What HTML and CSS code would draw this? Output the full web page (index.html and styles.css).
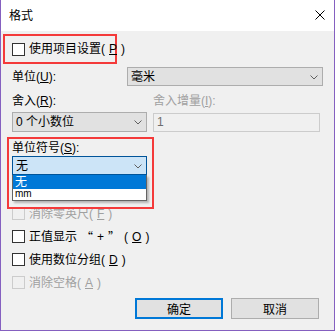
FILE: index.html
```html
<!DOCTYPE html>
<html lang="zh-CN">
<head>
    <meta charset="UTF-8">
    <title>格式</title>
    <link rel="stylesheet" href="styles.css">
</head>
<body>
    <div class="window">
        <div class="titlebar">
            <span class="title">格式</span>
            <svg class="close" width="10" height="10" viewBox="0 0 10 10">
                <path d="M0.5 0.5 L9.5 9.5 M9.5 0.5 L0.5 9.5" stroke="#000" stroke-width="1" fill="none"/>
            </svg>
        </div>

        <div class="client">
            <div class="mark mark-top">
                <label class="check"><span class="box"></span>使用项目设置(<u>P</u>)</label>
            </div>

            <div class="row unit-row">
                <span class="label unit-label">单位(<u>U</u>):</span>
                <div class="combo unit-combo">毫米<svg class="chev" width="8" height="5" viewBox="0 0 8 5"><path d="M0.5 0.5 L4 4 L7.5 0.5" stroke="#606060" fill="none"/></svg></div>
            </div>

            <div class="row label-row">
                <span class="label round-label">舍入(<u>R</u>):</span>
                <span class="label disabled">舍入增量(<u>I</u>):</span>
            </div>

            <div class="row field-row">
                <div class="combo round-combo">0 个小数位<svg class="chev" width="8" height="5" viewBox="0 0 8 5"><path d="M0.5 0.5 L4 4 L7.5 0.5" stroke="#606060" fill="none"/></svg></div>
                <div class="textbox">1</div>
            </div>

            <div class="mark mark-symbol">
                <span class="label symbol-label">单位符号(<u>S</u>):</span>
                <div class="combo focused">无<svg class="chev" width="8" height="5" viewBox="0 0 8 5"><path d="M0.5 0.5 L4 4 L7.5 0.5" stroke="#606060" fill="none"/></svg></div>
                <div class="droplist">
                    <div class="opt selected">无</div>
                    <div class="opt small">mm</div>
                </div>
            </div>

            <div class="checks">
                <label class="check disabled"><span class="box"></span>消除零英尺(<u>F</u>)</label>
                <label class="check"><span class="box"></span>正值显示 <span class="cjk">“</span>+<span class="cjk">”</span>(<u>O</u>)</label>
                <label class="check"><span class="box"></span>使用数位分组(<u>D</u>)</label>
                <label class="check disabled"><span class="box"></span>消除空格(<u>A</u>)</label>
            </div>

            <div class="buttons">
                <button class="btn default">确定</button>
                <button class="btn">取消</button>
            </div>
        </div>
    </div>
</body>
</html>
```

FILE: styles.css
```css
* {
    box-sizing: border-box;
    margin: 0;
    padding: 0;
}

body {
    font-family: "Liberation Sans", "Noto Sans CJK SC", sans-serif;
    font-size: 12px;
    line-height: 14px;
    color: #000;
    background-color: #f0f0f0;
}

.cjk {
    font-family: "Noto Sans CJK SC", sans-serif;
}

.window {
    width: 335px;
    height: 331px;
    border: 1px solid #8560c0;
    border-top: none;
    background-color: #f0f0f0;
}

.titlebar {
    height: 31px;
    background-color: #fff;
    display: flex;
    align-items: center;
    justify-content: space-between;
    padding: 0 9px 0 8px;
}

.close {
    display: block;
    margin-top: -1px;
}

.client {
    height: 299px;
    padding-top: 3px;
}

u {
    text-decoration: underline;
    text-underline-offset: 1px;
}

/* red annotation frames */
.mark {
    border: 2px solid #f43a3a;
    position: relative;
    z-index: 1;
}

.mark-top {
    margin-left: 2px;
    width: 114px;
    height: 30px;
    display: flex;
    align-items: center;
    padding-left: 7px;
}

.mark-symbol {
    margin: 5px 0 0 6px;
    width: 147px;
    height: 72px;
    padding: 2px 0 0 3px;
}

.row {
    display: flex;
    align-items: center;
    padding-left: 11px;
}

.unit-row {
    margin-top: 3px;
    height: 19px;
}

.unit-label {
    width: 115px;
}

.label-row {
    margin-top: 8px;
    height: 14px;
}

.round-label {
    width: 141px;
}

.field-row {
    margin-top: 4px;
    height: 20px;
    gap: 6px;
}

.label.disabled,
.check.disabled {
    color: #a0a0a0;
}

.combo {
    position: relative;
    height: 19px;
    background-color: #e1e1e1;
    border: 1px solid #adadad;
    padding-left: 3px;
    display: flex;
    align-items: center;
}

.chev {
    position: absolute;
    right: 4px;
    top: 7px;
}

.unit-combo {
    width: 196px;
}

.round-combo {
    width: 135px;
    height: 20px;
}

.textbox {
    width: 167px;
    height: 19px;
    border: 1px solid #cccccc;
    background-color: #f0f0f0;
    color: #6d6d6d;
    padding-left: 3px;
    display: flex;
    align-items: center;
}

.symbol-label {
    display: block;
}

.mark-symbol .combo {
    width: 135px;
    margin-top: 1px;
}

.combo.focused {
    background-color: #cce4f7;
    border-color: #005499;
}

.droplist {
    width: 135px;
    background-color: #fff;
    border: 1px solid #646464;
    border-top: none;
    box-shadow: 2px 2px 2px rgba(0,0,0,0.25);
}

.opt {
    height: 14px;
    line-height: 14px;
    padding-left: 2px;
    overflow: hidden;
}

.opt.selected {
    background-color: #0078d7;
    color: #fff;
}

.opt.small {
    height: 11px;
    line-height: 10px;
    font-size: 10px;
}

.checks {
    margin-top: -2px;
    padding-left: 11px;
    display: flex;
    flex-direction: column;
    gap: 10px;
}

.check {
    display: flex;
    align-items: center;
    gap: 4px;
    height: 13px;
    white-space: nowrap;
}

.box {
    width: 13px;
    height: 13px;
    border: 1px solid #333;
    background-color: #fff;
    flex-shrink: 0;
}

.check.disabled .box {
    border-color: #cccccc;
    background-color: #f0f0f0;
}

.buttons {
    margin-top: 9px;
    display: flex;
    justify-content: flex-end;
    gap: 8px;
    padding-right: 15px;
}

.btn {
    width: 88px;
    height: 21px;
    font-family: inherit;
    font-size: 12px;
    background-color: #e1e1e1;
    border: 1px solid #adadad;
    color: #000;
}

.btn.default {
    border: 2px solid #0078d7;
}
```
